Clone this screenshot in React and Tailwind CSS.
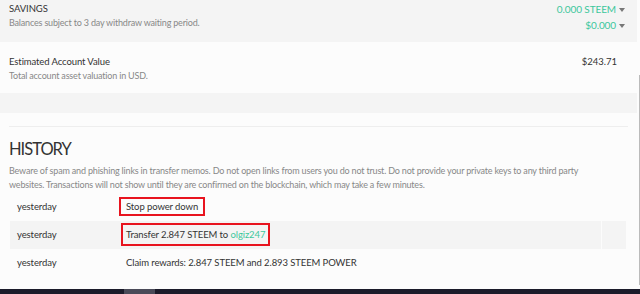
const GREEN = 'text-[#3cc79c]';

function Caret() {
  return (
    <span className="ml-[3px] inline-block w-0 h-0 border-l-[3px] border-r-[3px] border-t-[4px] border-l-transparent border-r-transparent border-t-[#777] align-middle" />
  );
}

const ROWS = [
  { when: 'yesterday', what: <span className="outline-2 outline-[#e8141f] px-[5px] py-[2px] -ml-[5px]">Stop power down</span> },
  {
    when: 'yesterday',
    what: (
      <span className="outline-2 outline-[#e8141f] px-[3px] py-[4px] -ml-[3px]">
        Transfer 2.847 STEEM to <span className={GREEN}>olgiz247</span>
      </span>
    ),
  },
  { when: 'yesterday', what: 'Claim rewards: 2.847 STEEM and 2.893 STEEM POWER' },
];

export default function App() {
  return (
    <div className="w-[640px] h-[294px] bg-[#fcfcfc] text-[#333] overflow-hidden relative flex flex-col" style={{ fontFamily: 'Lato, "Open Sans", sans-serif' }}>
      {/* savings */}
      <div className="h-[42px] bg-[#f4f4f4] mr-[3px] flex justify-between pl-[9px] pr-[12px] pt-[1px]">
        <div>
          <div className="text-[9.5px] leading-[15px] tracking-[-0.1px]">SAVINGS</div>
          <div className="text-[9px] leading-[14px] tracking-[-0.18px] text-[#888]">Balances subject to 3 day withdraw waiting period.</div>
        </div>
        <div className="flex flex-col items-end text-[10px] leading-[16px] tracking-[-0.1px]">
          <div className={GREEN}>0.000 STEEM<Caret /></div>
          <div className={GREEN}>$0.000<Caret /></div>
        </div>
      </div>

      {/* estimated value */}
      <div className="h-[51px] flex justify-between pl-[9px] pr-[23px] pt-[12px]">
        <div>
          <div className="text-[9.5px] leading-[15px] tracking-[-0.1px]">Estimated Account Value</div>
          <div className="text-[9px] leading-[14px] tracking-[-0.18px] text-[#888]">Total account asset valuation in USD.</div>
        </div>
        <div className="text-[9.5px] leading-[15px]">$243.71</div>
      </div>

      <div className="h-[20px] bg-[#f4f4f4] mr-[3px]" />

      {/* history */}
      <div className="flex-1 ml-[9px] mr-[12px] mt-[13px] border-t border-[#eee] pt-[10px]">
        <h2 className="text-[16.5px] leading-[24px] tracking-[-1px] text-[#333]">HISTORY</h2>
        <p className="text-[9px] leading-[14px] tracking-[-0.18px] text-[#888] mt-[3px] pr-[25px]">
          Beware of spam and phishing links in transfer memos. Do not open links from users you do not trust. Do not provide your private keys to any third party websites. Transactions will not show until they are confirmed on the blockchain, which may take a few minutes.
        </p>
        <div className="mt-[1px] ml-[1px] mr-[2px] text-[9.5px] tracking-[-0.1px]">
          {ROWS.map((r, i) => (
            <div key={i} className={`h-[28px] flex items-center ${i === 1 ? 'bg-[#f4f4f4]' : ''}`}>
              <div className="w-[116px] pl-[7px] shrink-0">{r.when}</div>
              <div className="flex-1">{r.what}</div>
              <div className={`w-[25px] h-full border-l border-[#fcfcfc] ${i === 1 ? 'bg-[#f4f4f4]' : ''}`} />
            </div>
          ))}
        </div>
      </div>

      <div className="h-[5px] bg-[#1b1b2a] relative">
        <div className="absolute left-[124px] top-0 w-[31px] h-full bg-[#4a4a58]" />
      </div>
      <div className="absolute right-0 top-[75px] w-[1px] h-[210px] bg-[#bbb]" />
    </div>
  );
}
